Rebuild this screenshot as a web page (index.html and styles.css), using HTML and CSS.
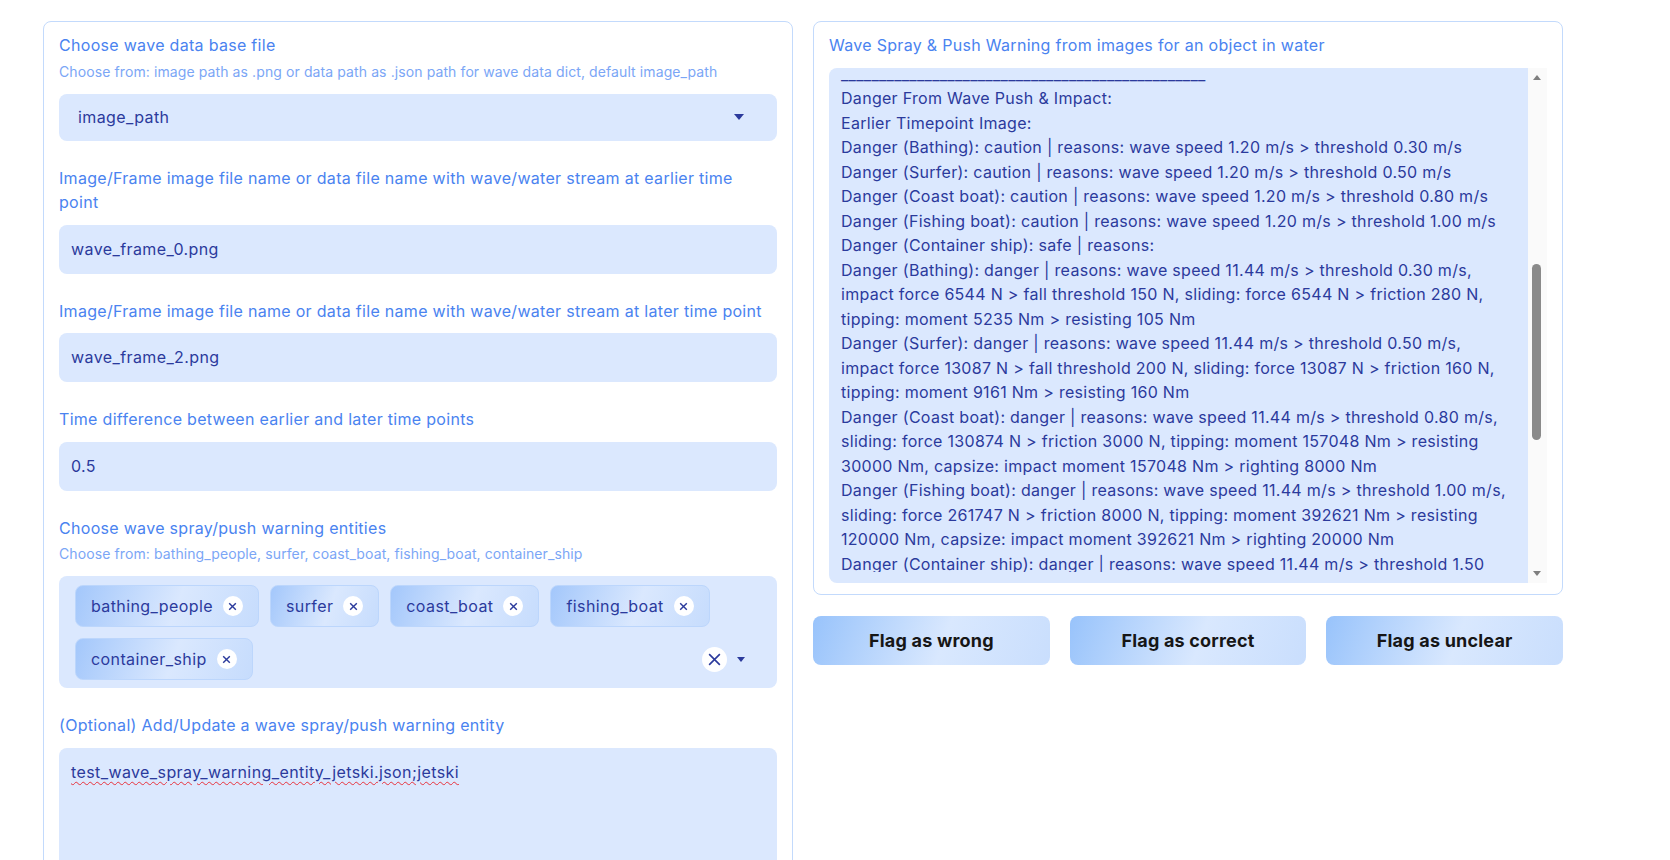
FILE: index.html
```html
<!DOCTYPE html>
<html lang="en">
<head>
    <meta charset="UTF-8">
    <title>Wave Spray & Push Warning</title>
    <link rel="stylesheet" href="styles.css">
</head>
<body>

    <div class="app">

        <div class="panel panel-left">

            <div class="field">
                <div class="label">Choose wave data base file</div>
                <div class="info">Choose from: image path as .png or data path as .json path for wave data dict, default image_path</div>
                <div class="box dropdown">
                    <span>image_path</span>
                    <span class="caret"></span>
                </div>
            </div>

            <div class="field">
                <div class="label">Image/Frame image file name or data file name with wave/water stream at earlier time point</div>
                <div class="box input">wave_frame_0.png</div>
            </div>

            <div class="field">
                <div class="label">Image/Frame image file name or data file name with wave/water stream at later time point</div>
                <div class="box input">wave_frame_2.png</div>
            </div>

            <div class="field">
                <div class="label">Time difference between earlier and later time points</div>
                <div class="box input">0.5</div>
            </div>

            <div class="field">
                <div class="label">Choose wave spray/push warning entities</div>
                <div class="info">Choose from: bathing_people, surfer, coast_boat, fishing_boat, container_ship</div>
                <div class="box multi">
                    <span class="chip">bathing_people <i class="chip-x"><svg viewBox="0 0 10 10"><path d="M2 2l6 6M8 2l-6 6"/></svg></i></span>
                    <span class="chip">surfer <i class="chip-x"><svg viewBox="0 0 10 10"><path d="M2 2l6 6M8 2l-6 6"/></svg></i></span>
                    <span class="chip">coast_boat <i class="chip-x"><svg viewBox="0 0 10 10"><path d="M2 2l6 6M8 2l-6 6"/></svg></i></span>
                    <span class="chip">fishing_boat <i class="chip-x"><svg viewBox="0 0 10 10"><path d="M2 2l6 6M8 2l-6 6"/></svg></i></span>
                    <span class="chip">container_ship <i class="chip-x"><svg viewBox="0 0 10 10"><path d="M2 2l6 6M8 2l-6 6"/></svg></i></span>
                    <div class="multi-ctrl">
                        <i class="clear-all"><svg viewBox="0 0 14 14"><path d="M2 2l10 10M12 2l-10 10"/></svg></i>
                        <span class="caret"></span>
                    </div>
                </div>
            </div>

            <div class="field">
                <div class="label">(Optional) Add/Update a wave spray/push warning entity</div>
                <div class="box area"><span class="typo">test_wave_spray_warning_entity_jetski.json;jetski</span></div>
            </div>

        </div>

        <div class="side">

            <div class="panel panel-right">
                <div class="label">Wave Spray &amp; Push Warning from images for an object in water</div>
                <div class="output">
                    <div class="output-text">________________________________________________
Danger From Wave Push &amp; Impact:
Earlier Timepoint Image:
Danger (Bathing): caution | reasons: wave speed 1.20 m/s &gt; threshold 0.30 m/s
Danger (Surfer): caution | reasons: wave speed 1.20 m/s &gt; threshold 0.50 m/s
Danger (Coast boat): caution | reasons: wave speed 1.20 m/s &gt; threshold 0.80 m/s
Danger (Fishing boat): caution | reasons: wave speed 1.20 m/s &gt; threshold 1.00 m/s
Danger (Container ship): safe | reasons:
Danger (Bathing): danger | reasons: wave speed 11.44 m/s &gt; threshold 0.30 m/s,
impact force 6544 N &gt; fall threshold 150 N, sliding: force 6544 N &gt; friction 280 N,
tipping: moment 5235 Nm &gt; resisting 105 Nm
Danger (Surfer): danger | reasons: wave speed 11.44 m/s &gt; threshold 0.50 m/s,
impact force 13087 N &gt; fall threshold 200 N, sliding: force 13087 N &gt; friction 160 N,
tipping: moment 9161 Nm &gt; resisting 160 Nm
Danger (Coast boat): danger | reasons: wave speed 11.44 m/s &gt; threshold 0.80 m/s,
sliding: force 130874 N &gt; friction 3000 N, tipping: moment 157048 Nm &gt; resisting
30000 Nm, capsize: impact moment 157048 Nm &gt; righting 8000 Nm
Danger (Fishing boat): danger | reasons: wave speed 11.44 m/s &gt; threshold 1.00 m/s,
sliding: force 261747 N &gt; friction 8000 N, tipping: moment 392621 Nm &gt; resisting
120000 Nm, capsize: impact moment 392621 Nm &gt; righting 20000 Nm
Danger (Container ship): danger | reasons: wave speed 11.44 m/s &gt; threshold 1.50</div>
                    <div class="scrollbar">
                        <span class="sb-up"></span>
                        <span class="sb-thumb"></span>
                        <span class="sb-down"></span>
                    </div>
                </div>
            </div>

            <div class="buttons">
                <button class="btn">Flag as wrong</button>
                <button class="btn">Flag as correct</button>
                <button class="btn">Flag as unclear</button>
            </div>

        </div>

    </div>

</body>
</html>
```

FILE: styles.css
```css
*{
    box-sizing: border-box;
}

html,body{
    margin: 0;
    padding: 0;
    background: #fff;
    font-family: Inter, "Noto Sans", sans-serif;
    font-size: 16px;
}

.app{
    display: flex;
    align-items: flex-start;
    gap: 20px;
    padding: 21px 0 0 43px;
}

.panel{
    width: 750px;
    border: 1px solid #c3dafc;
    border-radius: 8px;
    padding: 11px 15px;
    background: #fff;
}

.panel-left{
    padding-bottom: 40px;
}

.field{
    margin-bottom: 25px;
}

.label{
    color: #4a83f0;
    line-height: 24.5px;
    letter-spacing: 0.3px;
    padding-right: 6px;
    margin-bottom: 10px;
}

.info{
    color: #7ba6f6;
    font-size: 14px;
    line-height: 20px;
    letter-spacing: 0.1px;
    margin: -6px 0 12px;
}

.box{
    background: #dbe8fe;
    border-radius: 8px;
    color: #2b3a9c;
    line-height: 24px;
    letter-spacing: 0.4px;
}

.input{
    height: 49px;
    padding: 12px 12px;
}

.dropdown{
    height: 47px;
    padding: 0 33px 0 19px;
    display: flex;
    align-items: center;
    justify-content: space-between;
}

.caret{
    width: 0;
    height: 0;
    border-left: 5px solid transparent;
    border-right: 5px solid transparent;
    border-top: 6px solid #2b3a9c;
}

.multi{
    display: flex;
    flex-wrap: wrap;
    gap: 11px 11px;
    padding: 9px 16px 8px;
}

.chip{
    height: 42px;
    display: inline-flex;
    align-items: center;
    gap: 10px;
    padding: 0 15px;
    border: 1px solid #bcd6fc;
    border-radius: 8px;
    background: linear-gradient(110deg, #a3c7fb 0%, #dae8fe 55%, #c6dcfd 100%);
}

.chip-x{
    width: 20px;
    height: 20px;
    border-radius: 50%;
    background: #fff;
    display: inline-flex;
    align-items: center;
    justify-content: center;
}

.chip-x svg{
    width: 11px;
    height: 11px;
    fill: none;
    stroke: #2b3a9c;
    stroke-width: 1.3;
}

.multi-ctrl{
    height: 42px;
    margin-left: auto;
    display: flex;
    align-items: center;
    gap: 10px;
    padding-right: 16px;
}

.clear-all{
    width: 25px;
    height: 25px;
    border-radius: 50%;
    background: #fff;
    display: inline-flex;
    align-items: center;
    justify-content: center;
}

.clear-all svg{
    width: 15px;
    height: 15px;
    fill: none;
    stroke: #2b3a9c;
    stroke-width: 1.5;
}

.multi-ctrl .caret{
    border-left-width: 4px;
    border-right-width: 4px;
    border-top-width: 5px;
}

.area{
    min-height: 140px;
    padding: 12px;
}

.typo{
    text-decoration: underline wavy #e8323c;
    text-decoration-thickness: 1px;
    text-underline-offset: 3px;
}

.side{
    width: 750px;
}

.panel-right{
    padding-bottom: 11px;
}

.output{
    height: 515px;
    display: flex;
    background: #dbe8fe;
    border-radius: 8px 0 0 8px;
    overflow: hidden;
}

.output-text{
    flex: 1;
    padding: 0 12px;
    margin-top: -6px;
    height: 510px;
    overflow: hidden;
    white-space: pre;
    color: #2b3a9c;
    line-height: 24.5px;
    letter-spacing: 0.3px;
}

.scrollbar{
    width: 19px;
    background: #fafafa;
    position: relative;
}

.sb-up,
.sb-down{
    position: absolute;
    left: 5px;
    width: 0;
    height: 0;
    border-left: 4px solid transparent;
    border-right: 4px solid transparent;
}

.sb-up{
    top: 7px;
    border-bottom: 5px solid #7f7f7f;
}

.sb-down{
    bottom: 7px;
    border-top: 5px solid #7f7f7f;
}

.sb-thumb{
    position: absolute;
    left: 4px;
    top: 196px;
    width: 9px;
    height: 176px;
    border-radius: 5px;
    background: #8a8a8a;
}

.buttons{
    display: flex;
    gap: 20px;
    margin-top: 21px;
}

.btn{
    flex: 1;
    height: 49px;
    border: 0;
    border-radius: 8px;
    background: linear-gradient(110deg, #98c3fb 0%, #d9e8fe 55%, #c9defd 100%);
    font-family: Inter, "Noto Sans", sans-serif;
    font-size: 18px;
    font-weight: 700;
    letter-spacing: 0.2px;
    color: #161616;
}
```
